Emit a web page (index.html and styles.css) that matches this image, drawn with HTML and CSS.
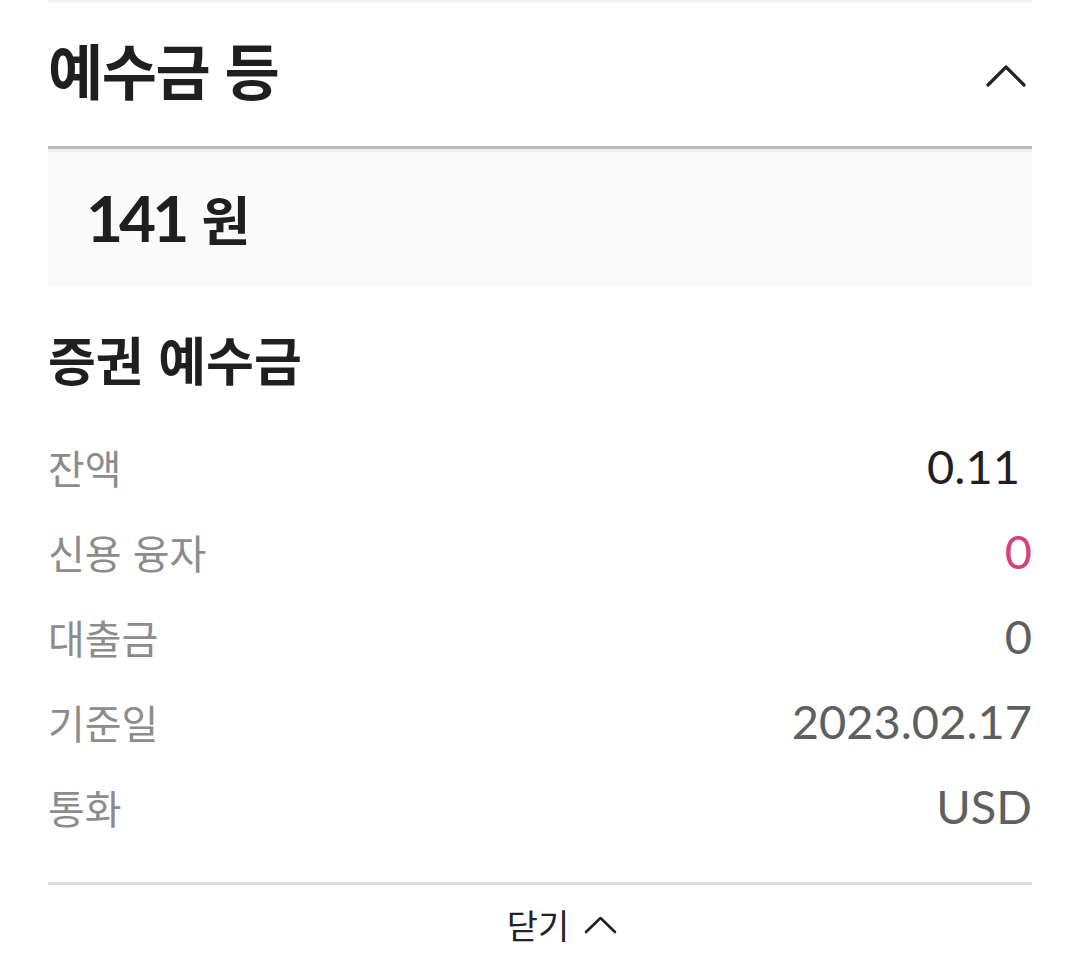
FILE: index.html
```html
<!DOCTYPE html>
<html lang="ko">
<head>
<meta charset="utf-8">
<link rel="stylesheet" href="styles.css">
</head>
<body>
<div class="page">
  <div class="top-rule"></div>
  <div class="header">
    <h1 class="title">예수금 등</h1>
    <svg class="chev" width="40" height="24" viewBox="0 0 40 24"><path d="M2 22 L20 4 L38 22" fill="none" stroke="#222" stroke-width="3.2" stroke-linecap="round" stroke-linejoin="round"/></svg>
  </div>
  <div class="summary">
    <span class="amount-num">141</span><span class="amount-unit">원</span>
  </div>
  <h2 class="subtitle">증권 예수금</h2>
  <div class="rows">
    <div class="row"><span class="label">잔액</span><span class="value v-dark">0.11&nbsp;</span></div>
    <div class="row"><span class="label">신용 융자</span><span class="value v-pink">0</span></div>
    <div class="row"><span class="label">대출금</span><span class="value v-gray">0</span></div>
    <div class="row"><span class="label">기준일</span><span class="value v-gray">2023.02.17</span></div>
    <div class="row"><span class="label">통화</span><span class="value v-gray">USD</span></div>
  </div>
  <div class="footer">
    <span class="close">닫기</span>
    <svg class="chev-small" width="33" height="19" viewBox="0 0 33 19"><path d="M2 17 L16.5 3 L31 17" fill="none" stroke="#222" stroke-width="2.6" stroke-linecap="round" stroke-linejoin="round"/></svg>
  </div>
</div>
</body>
</html>
```

FILE: styles.css
```css
html, body {
  margin: 0;
  padding: 0;
  background: #ffffff;
}
body {
  font-family: "Noto Sans CJK KR", "Noto Sans", sans-serif;
  color: #222;
}
.page {
  padding: 0 48px;
}
.top-rule {
  height: 2px;
  background: #eeeeee;
}
.header {
  height: 144px;
  display: flex;
  align-items: center;
  justify-content: space-between;
}
.title {
  margin: 0 0 10px;
  font-size: 60px;
  font-weight: 700;
  letter-spacing: -1.5px;
  line-height: 1;
  color: #1f1f1f;
}
.chev {
  margin-right: 6px;
  margin-top: 2px;
}
.summary {
  border-top: 3px solid #bbbbbb;
  box-shadow: inset 0 3px 0 #eeeeee;
  background: #fafafa;
  height: 141px;
  box-sizing: border-box;
  padding-left: 38px;
  display: flex;
  align-items: center;
  gap: 16px;
}
.amount-num {
  font-family: "Lato", sans-serif;
  font-weight: 700;
  font-size: 64px;
  letter-spacing: -4px;
  color: #1f1f1f;
  line-height: 1;
}
.amount-unit {
  font-weight: 700;
  font-size: 53px;
  color: #1f1f1f;
  line-height: 1;
}
.subtitle {
  margin: 22px 0 15px;
  height: 100px;
  line-height: 100px;
  font-size: 52px;
  font-weight: 700;
  letter-spacing: 0;
  color: #1f1f1f;
}
.rows {
  display: flex;
  flex-direction: column;
}
.row {
  height: 85px;
  display: flex;
  align-items: center;
  justify-content: space-between;
}
.label {
  font-size: 40px;
  color: #8c8c8c;
  line-height: 1;
}
.value {
  font-family: "Lato", sans-serif;
  font-size: 47px;
  line-height: 1;
}
.v-dark { color: #1f1f1f; }
.v-pink { color: #d4447c; }
.v-gray { color: #5f5f5f; }
.footer {
  margin-top: 33px;
  border-top: 3px solid #dddddd;
  height: 80px;
  display: flex;
  align-items: center;
  justify-content: center;
  gap: 15px;
  padding-left: 44px;
}
.close {
  font-size: 34px;
  color: #222;
  line-height: 1;
}
.chev-small {
  margin-top: -2px;
}
```
